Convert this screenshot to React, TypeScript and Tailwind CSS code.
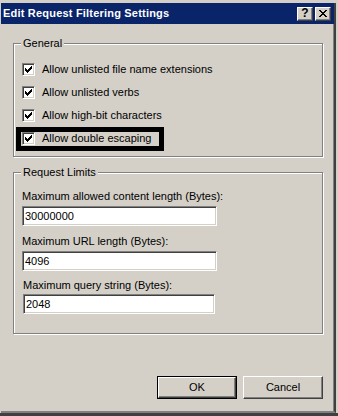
import React from 'react';

const CHECK = ['......X', '.....XX', 'X...XXX', 'XX.XXX.', 'XXXXX..', '.XXX...', '..X....'];
const CLOSE = ['XX....XX', '.XX..XX.', '..XXXX..', '...XX...', '..XXXX..', '.XX..XX.', 'XX....XX'];

function PixelGlyph({ rows, className }: { rows: string[]; className?: string }) {
  const w = rows[0].length;
  const h = rows.length;
  return (
    <svg width={w} height={h} viewBox={`0 0 ${w} ${h}`} shapeRendering="crispEdges" className={className}>
      {rows.flatMap((row, y) =>
        row.split('').map((c, x) => (c === 'X' ? <rect key={`${x}-${y}`} x={x} y={y} width={1} height={1} fill="#000" /> : null))
      )}
    </svg>
  );
}

function CheckBox() {
  return (
    <span className="block w-[13px] h-[13px] shrink-0 bg-white border border-t-[#808080] border-l-[#808080] border-r-white border-b-white shadow-[inset_1px_1px_0_#404040,inset_-1px_-1px_0_#d4d0c8]">
      <PixelGlyph rows={CHECK} className="block ml-[2px] mt-[2px]" />
    </span>
  );
}

function TextBox({ value, className = 'w-[195px]' }: { value: string; className?: string }) {
  return (
    <div
      className={`h-[20px] ${className} bg-white border border-t-[#808080] border-l-[#808080] border-r-white border-b-white shadow-[inset_1px_1px_0_#404040,inset_-1px_-1px_0_#d4d0c8] flex items-center pl-[2px]`}
    >
      {value}
    </div>
  );
}

function GroupBox({ title, className, children }: { title: string; className?: string; children: React.ReactNode }) {
  return (
    <fieldset
      className={`ml-[12px] w-[310px] border border-[#808080] shadow-[inset_1px_1px_0_#fff,1px_1px_0_#fff] ${className ?? ''}`}
    >
      <legend className="ml-[-1px] px-[2px] bg-[#d4d0c8] leading-[13px]">{title}</legend>
      {children}
    </fieldset>
  );
}

const OPTIONS = [
  'Allow unlisted file name extensions',
  'Allow unlisted verbs',
  'Allow high-bit characters',
  'Allow double escaping',
];

export default function App() {
  return (
    <div className="w-[338px] h-[416px] bg-[#d4d0c8] pt-[3px] pl-[1px] pr-[2px] border-b-[3px] border-b-[#404040] flex font-['Liberation_Sans',Arial,sans-serif] text-[11px] leading-[13px] text-black overflow-hidden">
      <div className="flex-1 flex flex-col border-r-[2px] border-b-[2px] border-r-[#404040] border-b-[#808080] shadow-[inset_-1px_0_0_#808080]">
        {/* title bar */}
        <div className="h-[21px] bg-[#0a246a] flex items-center pl-[2px] pr-[3px] shrink-0">
          <span className="text-white font-bold text-[11px] tracking-[0.2px]">Edit Request Filtering Settings</span>
          <div className="ml-auto flex gap-[2px]">
            <span className="w-[16px] h-[14px] bg-[#d4d0c8] border border-t-white border-l-white border-r-[#404040] border-b-[#404040] shadow-[inset_-1px_-1px_0_#808080] flex items-center justify-center font-bold text-[12px] leading-none pb-[1px]">
              ?
            </span>
            <span className="w-[16px] h-[14px] bg-[#d4d0c8] border border-t-white border-l-white border-r-[#404040] border-b-[#404040] shadow-[inset_-1px_-1px_0_#808080] flex items-center justify-center">
              <PixelGlyph rows={CLOSE} className="block" />
            </span>
          </div>
        </div>

        <GroupBox title="General" className="mt-[13px] pt-[8px] pb-[6px] pl-[8px]">
          {OPTIONS.map((label, i) => (
            <div key={label} className="relative h-[23px] flex items-center gap-[7px]">
              <CheckBox />
              <span>{label}</span>
              {i === 3 && (
                <span className="absolute left-[-6px] top-[0px] w-[148px] h-[24px] border-[5px] border-black" />
              )}
            </div>
          ))}
        </GroupBox>

        <GroupBox title="Request Limits" className="mt-[9px] pt-[11px] pb-[19px] pl-[8px]">
          <div>Maximum allowed content length (Bytes):</div>
          <TextBox value="30000000" className="w-[195px] mt-[3px]" />
          <div className="mt-[9px]">Maximum URL length (Bytes):</div>
          <TextBox value="4096" className="w-[195px] mt-[3px]" />
          <div className="mt-[8px] ml-[1px]">Maximum query string (Bytes):</div>
          <TextBox value="2048" className="w-[192px] mt-[2px] ml-[1px]" />
        </GroupBox>

        <div className="mt-[42px] ml-[156px] flex gap-[6px]">
          <button className="w-[80px] h-[23px] border border-black">
            <span className="h-full flex items-center justify-center bg-[#d4d0c8] border border-t-white border-l-white border-r-[#404040] border-b-[#404040] shadow-[inset_-1px_-1px_0_#808080]">
              OK
            </span>
          </button>
          <button className="w-[80px] h-[23px] flex items-center justify-center bg-[#d4d0c8] border border-t-white border-l-white border-r-[#404040] border-b-[#404040] shadow-[inset_-1px_-1px_0_#808080]">
            Cancel
          </button>
        </div>
      </div>
    </div>
  );
}
